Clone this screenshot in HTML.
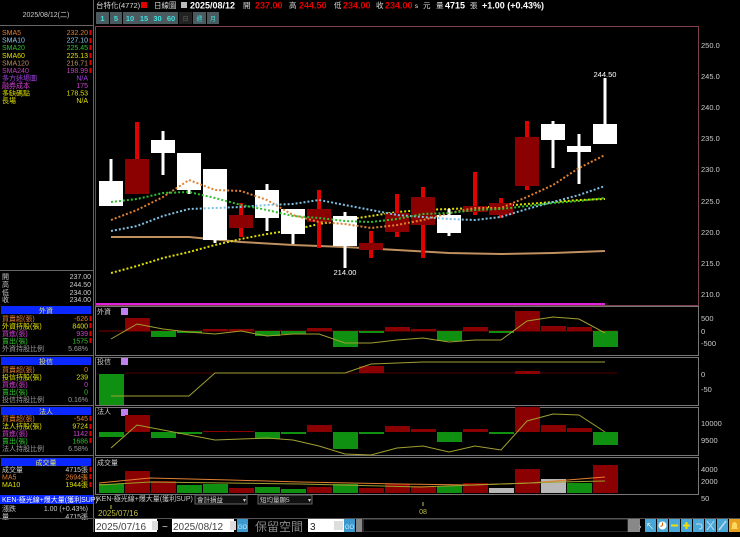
<!DOCTYPE html>
<html><head><meta charset="utf-8"><style>
body{margin:0;width:740px;height:532px;background:#000;overflow:hidden;font-family:"Liberation Sans","Noto Sans CJK TC",sans-serif}
svg text{font-family:"Liberation Sans","Noto Sans CJK TC",sans-serif}
</style></head><body>
<svg width="740" height="532" viewBox="0 0 740 532" xmlns="http://www.w3.org/2000/svg">
<!-- left panel borders -->
<rect x="0" y="0" width="740" height="532" fill="#000"/>
<line x1="93.5" y1="0" x2="93.5" y2="532" stroke="#666" stroke-width="1"/>
<line x1="0" y1="25.5" x2="93" y2="25.5" stroke="#666"/>
<text x="46" y="17" font-size="7" fill="#ccc" text-anchor="middle">2025/08/12(二)</text>
<g font-size="7">
<text x="2" y="35" fill="#e08030">SMA5</text><text x="88" y="35" fill="#e08030" text-anchor="end">232.20</text>
<text x="2" y="42.5" fill="#90c8e8">SMA10</text><text x="88" y="42.5" fill="#90c8e8" text-anchor="end">227.10</text>
<text x="2" y="50" fill="#30c030">SMA20</text><text x="88" y="50" fill="#30c030" text-anchor="end">225.45</text>
<text x="2" y="58" fill="#e0e000">SMA60</text><text x="88" y="58" fill="#e0e000" text-anchor="end">225.13</text>
<text x="2" y="65.5" fill="#c09060">SMA120</text><text x="88" y="65.5" fill="#c09060" text-anchor="end">216.71</text>
<text x="2" y="73" fill="#c040c0">SMA240</text><text x="88" y="73" fill="#c040c0" text-anchor="end">198.99</text>
<text x="2" y="80.5" fill="#a040e0">多方迷場圖</text><text x="88" y="80.5" fill="#a040e0" text-anchor="end">N/A</text>
<text x="2" y="88" fill="#d040d0">融券成本</text><text x="88" y="88" fill="#d040d0" text-anchor="end">175</text>
<text x="2" y="95.5" fill="#e0e000">多缺碼點</text><text x="88" y="95.5" fill="#e0e000" text-anchor="end">178.53</text>
<text x="2" y="103" fill="#e0e000">長場</text><text x="88" y="103" fill="#e0e000" text-anchor="end">N/A</text>
</g>
<g fill="#e00000"><rect x="89.5" y="30" width="2" height="5"/><rect x="89.5" y="38" width="2" height="5"/><rect x="89.5" y="45" width="2" height="5"/><rect x="89.5" y="53" width="2" height="5"/><rect x="89.5" y="60" width="2" height="5"/><rect x="89.5" y="68" width="2" height="5"/></g>
<line x1="0" y1="270.5" x2="93" y2="270.5" stroke="#666"/>
<g font-size="7" fill="#ccc">
<text x="2" y="279">開</text><text x="91" y="279" text-anchor="end">237.00</text>
<text x="2" y="287">高</text><text x="91" y="287" text-anchor="end">244.50</text>
<text x="2" y="295">低</text><text x="91" y="295" text-anchor="end">234.00</text>
<text x="2" y="302">收</text><text x="91" y="302" text-anchor="end">234.00</text>
</g>
<!-- 外資 left -->
<rect x="1" y="306" width="90" height="8" fill="#0a28ff"/>
<text x="46" y="313" font-size="7" fill="#e0e060" text-anchor="middle">外資</text>
<g font-size="7">
<text x="2" y="321" fill="#e08030">買賣超(張)</text><text x="88" y="321" fill="#e08030" text-anchor="end">-626</text>
<text x="2" y="328.5" fill="#e0e000">外資持股(張)</text><text x="88" y="328.5" fill="#e0e000" text-anchor="end">8400</text>
<text x="2" y="336" fill="#d040d0">買進(張)</text><text x="88" y="336" fill="#d040d0" text-anchor="end">939</text>
<text x="2" y="343.5" fill="#30c030">賣出(張)</text><text x="88" y="343.5" fill="#30c030" text-anchor="end">1575</text>
<text x="2" y="351" fill="#999">外資持股比例</text><text x="88" y="351" fill="#999" text-anchor="end">5.68%</text>
</g>
<line x1="0" y1="355.5" x2="93" y2="355.5" stroke="#666"/>
<rect x="1" y="357" width="90" height="8" fill="#0a28ff"/>
<text x="46" y="364" font-size="7" fill="#e0e060" text-anchor="middle">投信</text>
<g font-size="7">
<text x="2" y="372" fill="#e08030">買賣超(張)</text><text x="88" y="372" fill="#e08030" text-anchor="end">0</text>
<text x="2" y="379.5" fill="#e0e000">投信持股(張)</text><text x="88" y="379.5" fill="#e0e000" text-anchor="end">239</text>
<text x="2" y="387" fill="#d040d0">買進(張)</text><text x="88" y="387" fill="#d040d0" text-anchor="end">0</text>
<text x="2" y="394.5" fill="#30c030">賣出(張)</text><text x="88" y="394.5" fill="#30c030" text-anchor="end">0</text>
<text x="2" y="402" fill="#999">投信持股比例</text><text x="88" y="402" fill="#999" text-anchor="end">0.16%</text>
</g>
<line x1="0" y1="405.5" x2="93" y2="405.5" stroke="#666"/>
<rect x="1" y="407" width="90" height="8" fill="#0a28ff"/>
<text x="46" y="414" font-size="7" fill="#e0e060" text-anchor="middle">法人</text>
<g font-size="7">
<text x="2" y="421" fill="#e08030">買賣超(張)</text><text x="88" y="421" fill="#e08030" text-anchor="end">-545</text>
<text x="2" y="428.5" fill="#e0e000">法人持股(張)</text><text x="88" y="428.5" fill="#e0e000" text-anchor="end">9724</text>
<text x="2" y="436" fill="#d040d0">買進(張)</text><text x="88" y="436" fill="#d040d0" text-anchor="end">1142</text>
<text x="2" y="443.5" fill="#30c030">賣出(張)</text><text x="88" y="443.5" fill="#30c030" text-anchor="end">1686</text>
<text x="2" y="451" fill="#999">法人持股比例</text><text x="88" y="451" fill="#999" text-anchor="end">6.58%</text>
</g>
<line x1="0" y1="455.5" x2="93" y2="455.5" stroke="#666"/>
<rect x="1" y="458" width="90" height="8" fill="#0a28ff"/>
<text x="46" y="465" font-size="7" fill="#e0e060" text-anchor="middle">成交量</text>
<g font-size="7">
<text x="2" y="472" fill="#ccc">成交量</text><text x="88" y="472" fill="#ccc" text-anchor="end">4715張</text>
<text x="2" y="479.5" fill="#e08030">MA5</text><text x="88" y="479.5" fill="#e08030" text-anchor="end">2694張</text>
<text x="2" y="487" fill="#e0e000">MA10</text><text x="88" y="487" fill="#e0e000" text-anchor="end">1944張</text>
</g>
<rect x="0" y="495" width="93" height="9" fill="#0a28ff"/>
<text x="2" y="502" font-size="7" fill="#fff">KEN-極光線+爆大量(獲利SUP)</text>
<text x="2" y="511" font-size="7" fill="#ccc">漲跌</text><text x="88" y="511" font-size="7" fill="#ccc" text-anchor="end">1.00 (+0.43%)</text>
<text x="2" y="519" font-size="7" fill="#ccc">量</text><text x="88" y="519" font-size="7" fill="#ccc" text-anchor="end">4715張</text>
<g fill="#e00000"><rect x="89.5" y="316" width="2" height="5"/><rect x="89.5" y="323" width="2" height="5"/><rect x="89.5" y="331" width="2" height="5"/><rect x="89.5" y="338" width="2" height="5"/><rect x="89.5" y="416" width="2" height="5"/><rect x="89.5" y="424" width="2" height="5"/><rect x="89.5" y="431" width="2" height="5"/><rect x="89.5" y="438" width="2" height="5"/><rect x="89.5" y="467" width="2" height="5"/><rect x="89.5" y="474" width="2" height="5"/><rect x="89.5" y="482" width="2" height="5"/></g>

<!-- top header -->
<g font-size="7.5">
<text x="96" y="8" fill="#ddd">台特化(4772)</text>
<rect x="141" y="2" width="6" height="6" fill="#e00000"/>
<text x="154" y="8" fill="#ddd">日線圖</text>
<rect x="181" y="2" width="6" height="6" fill="#bbb"/>
<text x="190" y="8.5" fill="#fff" font-weight="bold" font-size="9">2025/08/12</text>
<text x="243" y="8" fill="#ddd">開</text><text x="255" y="8.5" fill="#e00000" font-weight="bold" font-size="9">237.00</text>
<text x="289" y="8" fill="#ddd">高</text><text x="299" y="8.5" fill="#e00000" font-weight="bold" font-size="9">244.50</text>
<text x="334" y="8" fill="#ddd">低</text><text x="343" y="8.5" fill="#e00000" font-weight="bold" font-size="9">234.00</text>
<text x="376" y="8" fill="#ddd">收</text><text x="385" y="8.5" fill="#e00000" font-weight="bold" font-size="9">234.00</text>
<text x="415" y="8" fill="#fff" font-size="6">s</text><text x="423" y="8" fill="#ddd">元</text>
<text x="436" y="8" fill="#ddd">量</text><text x="445" y="8.5" fill="#fff" font-weight="bold" font-size="9">4715</text>
<text x="470" y="8" fill="#ddd">張</text>
<text x="482" y="8.5" fill="#fff" font-weight="bold" font-size="9">+1.00 (+0.43%)</text>
</g>
<g font-size="7.5" text-anchor="middle">
<rect x="96" y="12" width="13" height="12" fill="#4a5a5e"/><text x="102.5" y="21" fill="#40e0e0" font-weight="bold">1</text>
<rect x="110" y="12" width="12" height="12" fill="#4a5a5e"/><text x="116" y="21" fill="#40e0e0" font-weight="bold">5</text>
<rect x="123" y="12" width="14" height="12" fill="#4a5a5e"/><text x="130" y="21" fill="#40e0e0" font-weight="bold">10</text>
<rect x="137" y="12" width="14" height="12" fill="#4a5a5e"/><text x="144" y="21" fill="#40e0e0" font-weight="bold">15</text>
<rect x="151" y="12" width="13" height="12" fill="#4a5a5e"/><text x="157.5" y="21" fill="#40e0e0" font-weight="bold">30</text>
<rect x="164" y="12" width="14" height="12" fill="#4a5a5e"/><text x="171" y="21" fill="#40e0e0" font-weight="bold">60</text>
<rect x="179" y="12" width="13" height="12" fill="#222"/><text x="185.5" y="21" fill="#666" font-size="6">日</text>
<rect x="193" y="12" width="13" height="12" fill="#4a5a5e"/><text x="199.5" y="21" fill="#40e0e0" font-size="6">週</text>
<rect x="207" y="12" width="12" height="12" fill="#4a5a5e"/><text x="213" y="21" fill="#40e0e0" font-size="6">月</text>
</g>

<!-- main chart frame -->
<rect x="95.5" y="26.5" width="603" height="279" fill="none" stroke="#804050"/>
<g font-size="7.5" fill="#ccc">
<text x="701" y="48">250.0</text><text x="701" y="79">245.0</text><text x="701" y="110">240.0</text>
<text x="701" y="141">235.0</text><text x="701" y="172">230.0</text><text x="701" y="204">225.0</text>
<text x="701" y="235">220.0</text><text x="701" y="266">215.0</text><text x="701" y="297">210.0</text>
</g>
<!-- MAs -->
<polyline fill="none" stroke="#c09060" stroke-width="2" points="111,237 189,237 241,242 293,245 345,247 397,250 449,253 501,254 553,253 605,251"/>
<polyline fill="none" stroke="#e0e000" stroke-width="2" stroke-dasharray="2,2" points="111,273 137,266 163,258 189,252 215,245 241,239 267,234 293,230 319,224 345,220 371,216 397,212 423,210 449,209 475,208 501,206 527,204 553,202 579,200 605,199"/>
<!-- candles -->
<g>
<rect x="109.5" y="159" width="3" height="47" fill="#fff"/><rect x="99" y="181" width="24" height="25" fill="#fff"/>
<rect x="135" y="122" width="4" height="72" fill="#e00000"/><rect x="125" y="159" width="24" height="35" fill="#8b0000"/>
<rect x="161.5" y="131" width="3" height="44" fill="#fff"/><rect x="151" y="140" width="24" height="13" fill="#fff"/>
<rect x="187.5" y="153" width="3" height="41" fill="#fff"/><rect x="177" y="153" width="24" height="37" fill="#fff"/>
<rect x="213.5" y="169" width="3" height="74" fill="#fff"/><rect x="203" y="169" width="24" height="71" fill="#fff"/>
<rect x="239" y="203" width="4" height="34" fill="#e00000"/><rect x="229" y="215" width="24" height="13" fill="#8b0000"/>
<rect x="265.5" y="184" width="3" height="47" fill="#fff"/><rect x="255" y="190" width="24" height="28" fill="#fff"/>
<rect x="291.5" y="209" width="3" height="35" fill="#fff"/><rect x="281" y="209" width="24" height="25" fill="#fff"/>
<rect x="317" y="190" width="4" height="58" fill="#e00000"/><rect x="307" y="209" width="24" height="13" fill="#8b0000"/>
<rect x="343.5" y="212" width="3" height="56" fill="#fff"/><rect x="333" y="216" width="24" height="30" fill="#fff"/>
<rect x="369" y="231" width="4" height="27" fill="#e00000"/><rect x="359" y="243" width="24" height="7" fill="#8b0000"/>
<rect x="395" y="194" width="4" height="43" fill="#e00000"/><rect x="385" y="213" width="24" height="19" fill="#8b0000"/>
<rect x="421" y="187" width="4" height="71" fill="#e00000"/><rect x="411" y="197" width="24" height="28" fill="#8b0000"/>
<rect x="447.5" y="209" width="3" height="27" fill="#fff"/><rect x="437" y="215" width="24" height="18" fill="#fff"/>
<rect x="473" y="172" width="4" height="43" fill="#e00000"/><rect x="463" y="206" width="24" height="6" fill="#8b0000"/>
<rect x="499" y="198" width="4" height="20" fill="#e00000"/><rect x="489" y="203" width="24" height="12" fill="#8b0000"/>
<rect x="525" y="121" width="4" height="69" fill="#e00000"/><rect x="515" y="137" width="24" height="49" fill="#8b0000"/>
<rect x="551.5" y="121" width="3" height="47" fill="#fff"/><rect x="541" y="124" width="24" height="16" fill="#fff"/>
<rect x="577.5" y="134" width="3" height="50" fill="#fff"/><rect x="567" y="146" width="24" height="6" fill="#fff"/>
<rect x="603.5" y="78" width="3" height="66" fill="#fff"/><rect x="593" y="124" width="24" height="20" fill="#fff"/>
</g>
<polyline fill="none" stroke="#e08030" stroke-width="2" stroke-dasharray="2,2" points="111,220 137,210 163,197 189,180 215,190 241,191 267,200 293,215 319,222 345,224 371,228 397,225 423,220 449,213 475,208 501,208 527,197 553,185 579,168 605,155"/>
<polyline fill="none" stroke="#80c0e0" stroke-width="2" stroke-dasharray="2,2" points="111,231 137,226 163,216 189,209 215,208 241,207 267,205 293,204 319,200 345,205 371,210 397,215 423,217 449,219 475,220 501,217 527,209 553,202 579,195 605,186"/>
<polyline fill="none" stroke="#30c030" stroke-width="2" stroke-dasharray="2,2" points="111,202 137,199 163,193 189,192 215,198 241,205 267,210 293,216 319,218 345,221 371,222 397,219 423,214 449,213 475,210 501,209 527,206 553,203 579,201 605,198"/>
<text x="605" y="77" font-size="7.5" fill="#fff" text-anchor="middle">244.50</text>
<text x="345" y="275" font-size="7.5" fill="#fff" text-anchor="middle">214.00</text>
<rect x="96" y="303" width="509" height="2" fill="#e020e0"/>

<!-- sub panels frames -->
<g fill="none" stroke="#777">
<rect x="95.5" y="306.5" width="603" height="49"/>
<rect x="95.5" y="357.5" width="603" height="48"/>
<rect x="95.5" y="407.5" width="603" height="48"/>
<rect x="95.5" y="457.5" width="603" height="37"/>
</g>
<!-- 外資 -->
<text x="97" y="314" font-size="7" fill="#ccc">外資</text><rect x="121" y="308" width="7" height="7" fill="#c080f0"/>
<line x1="99" y1="331" x2="617" y2="331" stroke="#800000"/>
<g fill="#8b0000"><rect x="125" y="318" width="25" height="13"/><rect x="203" y="329" width="25" height="2"/><rect x="229" y="329" width="25" height="2"/><rect x="307" y="328" width="25" height="3"/><rect x="385" y="327" width="25" height="4"/><rect x="411" y="329" width="25" height="2"/><rect x="463" y="327" width="25" height="4"/><rect x="515" y="311" width="25" height="20"/><rect x="541" y="326" width="25" height="5"/><rect x="567" y="327" width="25" height="4"/></g>
<g fill="#109010"><rect x="151" y="331" width="25" height="6"/><rect x="177" y="331" width="25" height="2"/><rect x="255" y="331" width="25" height="5"/><rect x="281" y="331" width="25" height="3"/><rect x="333" y="331" width="25" height="16"/><rect x="359" y="331" width="25" height="2"/><rect x="437" y="331" width="25" height="10"/><rect x="489" y="331" width="25" height="2"/><rect x="593" y="331" width="25" height="16"/></g>
<polyline fill="none" stroke="#a0a030" points="111,339 137,324 163,329 189,332 215,334 241,331 267,336 293,334 319,334 345,343 371,343 397,340 423,338 449,342 475,340 501,340 527,321 553,317 579,319 605,333"/>
<g font-size="7.5" fill="#ccc"><text x="701" y="321">500</text><text x="701" y="334">0</text><text x="701" y="346">-500</text></g>
<!-- 投信 -->
<text x="97" y="364" font-size="7" fill="#ccc">投信</text><rect x="121" y="358" width="7" height="7" fill="#c080f0"/>
<line x1="125" y1="373" x2="617" y2="373" stroke="#500000"/>
<rect x="99" y="374" width="25" height="31" fill="#109010"/>
<rect x="359" y="366" width="25" height="7" fill="#8b0000"/><rect x="515" y="371" width="25" height="3" fill="#8b0000"/>
<polyline fill="none" stroke="#a0a030" points="111,396 189,396 215,373 345,373 371,364 423,362 605,362"/>
<g font-size="7.5" fill="#ccc"><text x="701" y="377">0</text><text x="701" y="392">-50</text></g>
<!-- 法人 -->
<text x="97" y="414" font-size="7" fill="#ccc">法人</text><rect x="121" y="409" width="7" height="7" fill="#c080f0"/>
<g fill="#8b0000"><rect x="125" y="415" width="25" height="17"/><rect x="203" y="431" width="25" height="1"/><rect x="229" y="431" width="25" height="1"/><rect x="307" y="425" width="25" height="7"/><rect x="385" y="426" width="25" height="6"/><rect x="411" y="429" width="25" height="3"/><rect x="463" y="429" width="25" height="3"/><rect x="515" y="407" width="25" height="25"/><rect x="541" y="425" width="25" height="7"/><rect x="567" y="428" width="25" height="4"/></g>
<g fill="#109010"><rect x="99" y="432" width="25" height="5"/><rect x="151" y="432" width="25" height="6"/><rect x="177" y="432" width="25" height="2"/><rect x="255" y="432" width="25" height="7"/><rect x="281" y="432" width="25" height="2"/><rect x="333" y="432" width="25" height="17"/><rect x="359" y="432" width="25" height="2"/><rect x="437" y="432" width="25" height="10"/><rect x="489" y="432" width="25" height="2"/><rect x="593" y="432" width="25" height="13"/></g>
<polyline fill="none" stroke="#a0a030" points="111,448 137,425 163,430 189,435 215,440 241,439 267,438 293,440 319,446 345,454 371,455 397,448 423,446 449,452 475,446 501,450 527,421 553,414 579,415 605,432"/>
<g font-size="7.5" fill="#ccc"><text x="701" y="426">10000</text><text x="701" y="443">9500</text></g>
<!-- 成交量 -->
<text x="97" y="465" font-size="7" fill="#ccc">成交量</text>
<g fill="#8b0000"><rect x="125" y="471" width="25" height="22"/><rect x="151" y="481" width="25" height="12"/><rect x="229" y="488" width="25" height="5"/><rect x="307" y="487" width="25" height="6"/><rect x="359" y="488" width="25" height="5"/><rect x="385" y="484" width="25" height="9"/><rect x="411" y="486" width="25" height="7"/><rect x="463" y="483" width="25" height="10"/><rect x="515" y="469" width="25" height="24"/><rect x="593" y="465" width="25" height="28"/></g>
<g fill="#109010"><rect x="99" y="484" width="25" height="9"/><rect x="177" y="485" width="25" height="8"/><rect x="203" y="484" width="25" height="9"/><rect x="255" y="487" width="25" height="6"/><rect x="281" y="489" width="25" height="4"/><rect x="333" y="484" width="25" height="9"/><rect x="437" y="486" width="25" height="7"/><rect x="567" y="483" width="25" height="10"/></g>
<g fill="#b8b8b8"><rect x="489" y="488" width="25" height="5"/><rect x="541" y="479" width="25" height="14"/></g>
<polyline fill="none" stroke="#e08030" points="99,483 150,478 230,480 300,482 400,484 470,485 530,483 580,479 605,477"/>
<polyline fill="none" stroke="#a0a030" points="99,485 150,482 300,484 420,487 500,484 560,482 605,481"/>
<g font-size="7.5" fill="#ccc"><text x="701" y="472">4000</text><text x="701" y="484">2000</text><text x="701" y="501">50</text></g>
<!-- bottom -->
<rect x="95.5" y="495.5" width="603" height="0" fill="none" stroke="#777"/>
<text x="97" y="501" font-size="7" fill="#ccc">KEN-極光線+爆大量(獲利SUP)</text>
<rect x="195" y="495" width="52" height="9" fill="#111" stroke="#666"/><text x="197" y="502" font-size="6.5" fill="#ccc">會計損益</text><text x="243" y="502" font-size="6" fill="#ccc">▾</text>
<rect x="258" y="495" width="54" height="9" fill="#111" stroke="#666"/><text x="260" y="502" font-size="6.5" fill="#ccc">短均量顯5</text><text x="308" y="502" font-size="6" fill="#ccc">▾</text>
<line x1="111" y1="505" x2="111" y2="509" stroke="#c0c040"/>
<text x="98" y="516" font-size="8" fill="#c0c040">2025/07/16</text>
<line x1="423" y1="502" x2="423" y2="506" stroke="#c0c040"/>
<text x="423" y="514" font-size="7" fill="#c0c040" text-anchor="middle">08</text>
<rect x="0" y="518" width="740" height="1" fill="#555"/>
<rect x="95" y="519" width="62" height="13" fill="#fff"/><text x="96" y="530" font-size="10" fill="#444">2025/07/16</text>
<rect x="152" y="521" width="6" height="9" fill="#ddd"/>
<text x="162" y="530" font-size="10" fill="#ddd">~</text>
<rect x="172" y="519" width="62" height="13" fill="#fff"/><text x="173" y="530" font-size="10" fill="#444">2025/08/12</text>
<rect x="230" y="521" width="6" height="9" fill="#ddd"/>
<rect x="237" y="519" width="11" height="13" fill="#3a9ad0"/><text x="242.5" y="529" font-size="6" fill="#cef" text-anchor="middle">GO</text>
<text x="255" y="531" font-size="12" fill="#888">保留空間</text>
<rect x="308" y="519" width="36" height="13" fill="#fff"/><text x="310" y="530" font-size="10" fill="#222">3</text>
<rect x="334" y="521" width="9" height="9" fill="#ddd"/>
<rect x="344" y="519" width="11" height="13" fill="#3a9ad0"/><text x="349.5" y="529" font-size="6" fill="#cef" text-anchor="middle">GO</text>
<rect x="356" y="519" width="6" height="13" fill="#888"/>
<rect x="363" y="519" width="265" height="13" fill="#000" stroke="#555"/>
<rect x="628" y="519" width="12" height="13" fill="#888"/><text x="639" y="529" font-size="7" fill="#fff">›</text>
<g>
<rect x="645" y="519" width="11" height="13" fill="#4aa8d8"/><text x="650" y="529" font-size="8" fill="#fff" text-anchor="middle">↖</text>
<rect x="657" y="519" width="11" height="13" fill="#4aa8d8"/><circle cx="662.5" cy="525.5" r="4" fill="#fff"/><path d="M662.5 525.5 L662.5 522.5 M662.5 525.5 L660.5 526.5" stroke="#e06000" stroke-width="1"/>
<rect x="669" y="519" width="11" height="13" fill="#4aa8d8"/><rect x="671" y="524.5" width="7" height="2" fill="#f0e000"/>
<rect x="681" y="519" width="11" height="13" fill="#4aa8d8"/><rect x="683" y="524.5" width="7" height="2" fill="#f0e000"/><rect x="685.5" y="522" width="2" height="7" fill="#f0e000"/>
<rect x="693" y="519" width="11" height="13" fill="#4aa8d8"/><path d="M696 524 L700 524 Q702 524 702 527 Q702 529 699 529" stroke="#bde" fill="none"/>
<rect x="705" y="519" width="11" height="13" fill="#4aa8d8"/><path d="M707 521 L714 530 M714 521 L707 530" stroke="#bde"/>
<rect x="717" y="519" width="11" height="13" fill="#4aa8d8"/><path d="M719 530 L726 521" stroke="#bde" stroke-width="1.5"/>
<rect x="729" y="519" width="11" height="13" fill="#e8a020"/><path d="M731 529 L738 529 L737 527 L737 524 Q734.5 520 732 524 L732 527 Z" fill="#ffd860"/>
</g>
</svg>
</body></html>
